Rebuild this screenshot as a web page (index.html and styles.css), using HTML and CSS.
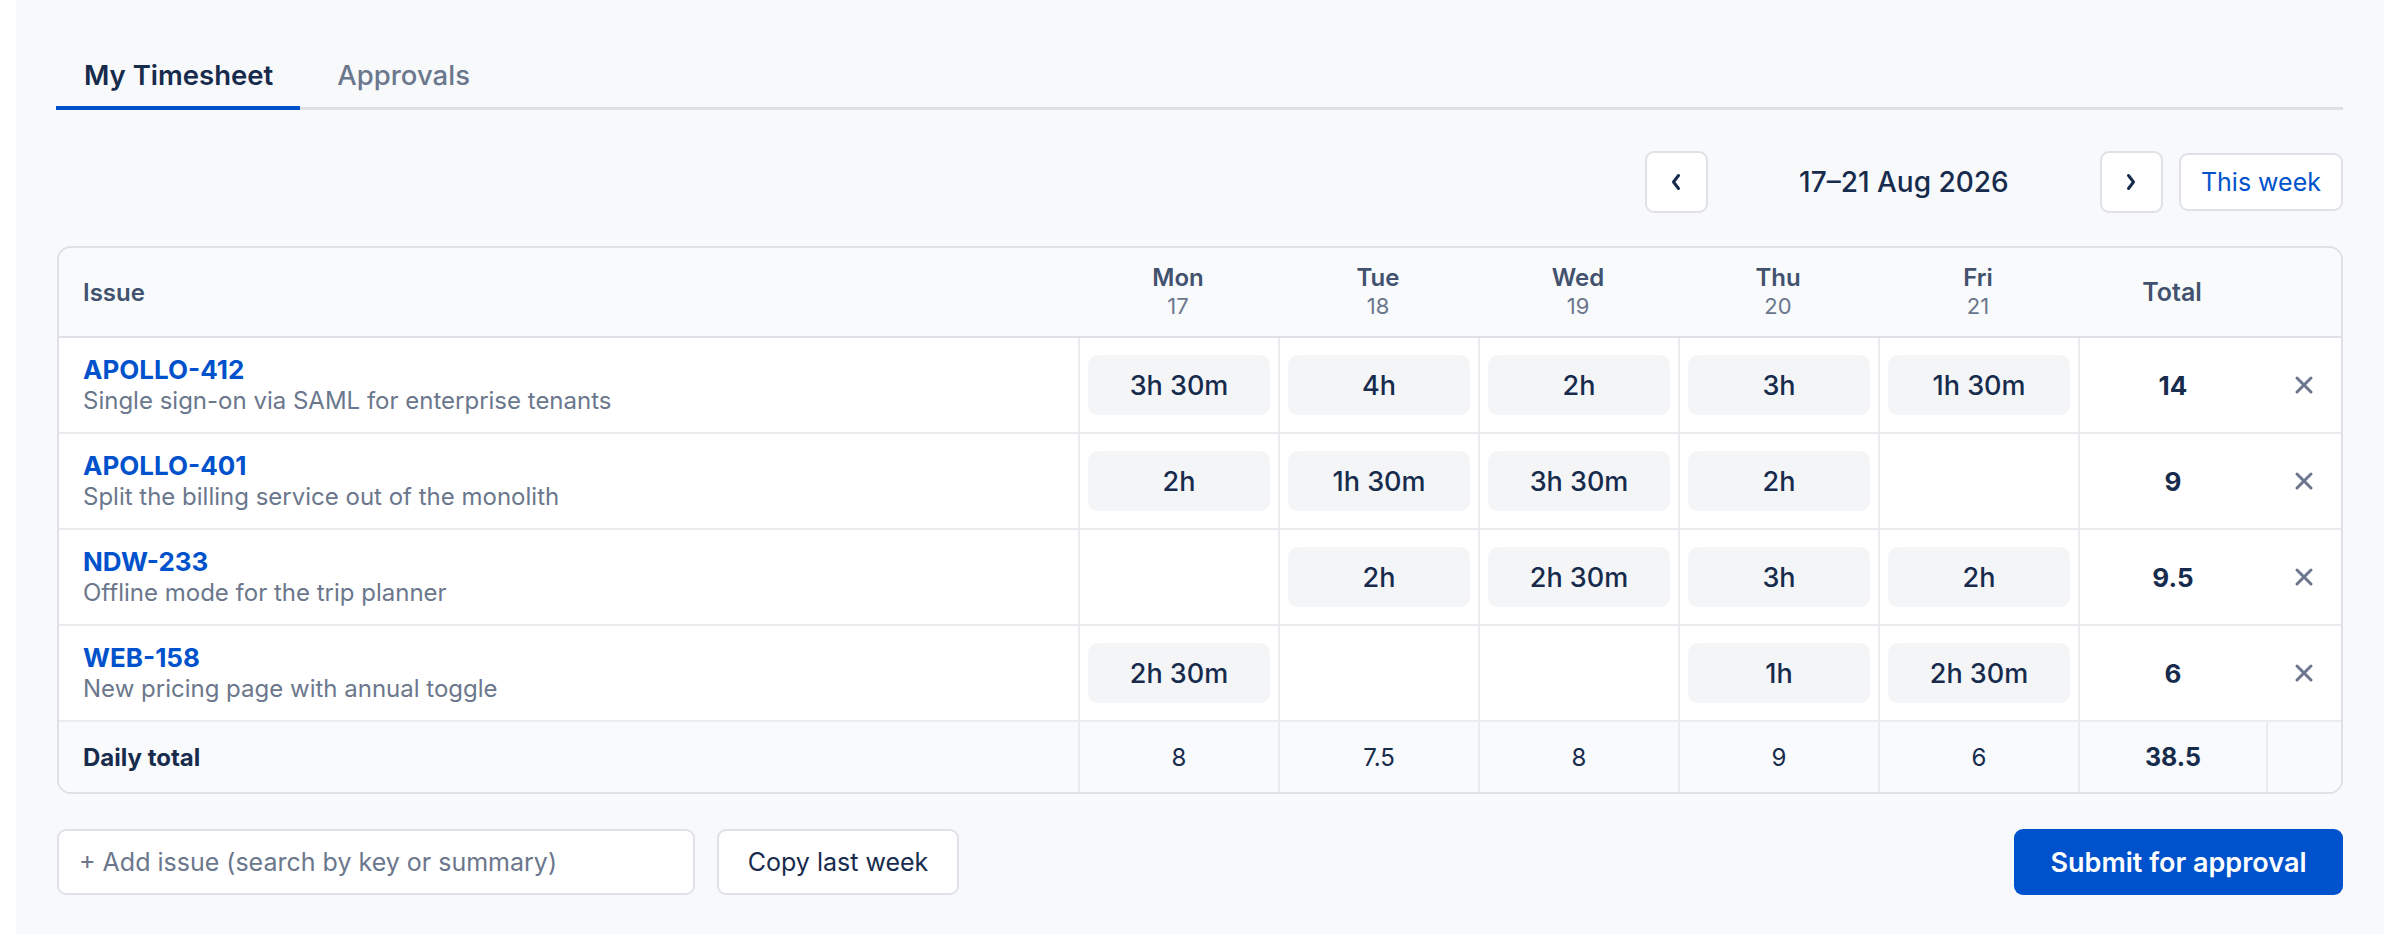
FILE: index.html
```html
<!DOCTYPE html>
<html lang="en">
<head>
<meta charset="utf-8">
<title>Timesheet</title>
<link rel="stylesheet" href="styles.css">
</head>
<body>
<div class="app">
  <nav class="tabs">
    <a class="tab tab-active">My Timesheet</a>
    <a class="tab">Approvals</a>
  </nav>

  <div class="week-nav">
    <button class="nav-btn" aria-label="Previous week">
      <svg width="12" height="18" viewBox="0 0 12 18"><polyline points="8.5,2.5 3.5,9 8.5,15.5" fill="none" stroke="#172b4d" stroke-width="3" stroke-linecap="round" stroke-linejoin="round"/></svg>
    </button>
    <div class="week-label">17–21 Aug 2026</div>
    <button class="nav-btn" aria-label="Next week">
      <svg width="12" height="18" viewBox="0 0 12 18"><polyline points="3.5,2.5 8.5,9 3.5,15.5" fill="none" stroke="#172b4d" stroke-width="3" stroke-linecap="round" stroke-linejoin="round"/></svg>
    </button>
    <button class="this-week">This week</button>
  </div>

  <div class="sheet">
    <div class="row head">
      <div class="cell issue-col">Issue</div>
      <div class="cell day"><span class="day-name">Mon</span><span class="day-date">17</span></div>
      <div class="cell day"><span class="day-name">Tue</span><span class="day-date">18</span></div>
      <div class="cell day"><span class="day-name">Wed</span><span class="day-date">19</span></div>
      <div class="cell day"><span class="day-name">Thu</span><span class="day-date">20</span></div>
      <div class="cell day"><span class="day-name">Fri</span><span class="day-date">21</span></div>
      <div class="cell total-head">Total</div>
      <div class="cell"></div>
    </div>

    <div class="row body">
      <div class="cell issue-col"><a class="key">APOLLO-412</a><span class="summary">Single sign-on via SAML for enterprise tenants</span></div>
      <div class="cell slot"><span class="pill">3h 30m</span></div>
      <div class="cell slot"><span class="pill">4h</span></div>
      <div class="cell slot"><span class="pill">2h</span></div>
      <div class="cell slot"><span class="pill">3h</span></div>
      <div class="cell slot"><span class="pill">1h 30m</span></div>
      <div class="cell slot total">14</div>
      <div class="cell remove"><svg width="20" height="20" viewBox="0 0 20 20"><path d="M3 3L17 17M17 3L3 17" stroke="#6b778c" stroke-width="3" stroke-linecap="round"/></svg></div>
    </div>

    <div class="row body">
      <div class="cell issue-col"><a class="key">APOLLO-401</a><span class="summary">Split the billing service out of the monolith</span></div>
      <div class="cell slot"><span class="pill">2h</span></div>
      <div class="cell slot"><span class="pill">1h 30m</span></div>
      <div class="cell slot"><span class="pill">3h 30m</span></div>
      <div class="cell slot"><span class="pill">2h</span></div>
      <div class="cell slot"></div>
      <div class="cell slot total">9</div>
      <div class="cell remove"><svg width="20" height="20" viewBox="0 0 20 20"><path d="M3 3L17 17M17 3L3 17" stroke="#6b778c" stroke-width="3" stroke-linecap="round"/></svg></div>
    </div>

    <div class="row body">
      <div class="cell issue-col"><a class="key">NDW-233</a><span class="summary">Offline mode for the trip planner</span></div>
      <div class="cell slot"></div>
      <div class="cell slot"><span class="pill">2h</span></div>
      <div class="cell slot"><span class="pill">2h 30m</span></div>
      <div class="cell slot"><span class="pill">3h</span></div>
      <div class="cell slot"><span class="pill">2h</span></div>
      <div class="cell slot total">9.5</div>
      <div class="cell remove"><svg width="20" height="20" viewBox="0 0 20 20"><path d="M3 3L17 17M17 3L3 17" stroke="#6b778c" stroke-width="3" stroke-linecap="round"/></svg></div>
    </div>

    <div class="row body">
      <div class="cell issue-col"><a class="key">WEB-158</a><span class="summary">New pricing page with annual toggle</span></div>
      <div class="cell slot"><span class="pill">2h 30m</span></div>
      <div class="cell slot"></div>
      <div class="cell slot"></div>
      <div class="cell slot"><span class="pill">1h</span></div>
      <div class="cell slot"><span class="pill">2h 30m</span></div>
      <div class="cell slot total">6</div>
      <div class="cell remove"><svg width="20" height="20" viewBox="0 0 20 20"><path d="M3 3L17 17M17 3L3 17" stroke="#6b778c" stroke-width="3" stroke-linecap="round"/></svg></div>
    </div>

    <div class="row foot">
      <div class="cell issue-col foot-label">Daily total</div>
      <div class="cell slot">8</div>
      <div class="cell slot">7.5</div>
      <div class="cell slot">8</div>
      <div class="cell slot">9</div>
      <div class="cell slot">6</div>
      <div class="cell slot total">38.5</div>
      <div class="cell slot"></div>
    </div>
  </div>

  <div class="actions">
    <input class="add-issue" type="text" placeholder="+ Add issue (search by key or summary)">
    <button class="copy-btn">Copy last week</button>
    <button class="submit-btn">Submit for approval</button>
  </div>
</div>
</body>
</html>
```

FILE: styles.css
```css
* {
  box-sizing: border-box;
}

html, body {
  margin: 0;
  background: #ffffff;
}

body {
  font-family: Inter, "Noto Sans", "Liberation Sans", sans-serif;
  color: #172b4d;
}

.app {
  margin: 0 16px;
  min-height: 934px;
  padding: 43px 41px 0;
  background: #f8f9fb;
}

/* tabs */
.tabs {
  display: flex;
  gap: 10px;
  border-bottom: 3px solid #dfe1e6;
}

.tab {
  display: block;
  padding: 12px 27px;
  margin-bottom: -3px;
  border-bottom: 3px solid transparent;
  font-size: 27.5px;
  line-height: 40px;
  font-weight: 500;
  color: #6b778c;
}

.tab-active {
  margin-left: -1px;
  padding-left: 28px;
  border-bottom: 4px solid #0052cc;
  margin-bottom: -3px;
  padding-bottom: 11px;
  font-weight: 600;
  color: #172b4d;
}

/* week navigation */
.week-nav {
  display: flex;
  justify-content: flex-end;
  align-items: center;
  gap: 16px;
  margin-top: 41px;
  height: 62px;
}

.nav-btn {
  width: 63px;
  height: 62px;
  display: flex;
  align-items: center;
  justify-content: center;
  padding: 0;
  background: #ffffff;
  border: 2px solid #dfe1e6;
  border-radius: 9px;
}

.week-label {
  width: 360px;
  text-align: center;
  font-size: 28px;
  font-weight: 500;
  color: #172b4d;
}

.this-week {
  height: 58px;
  padding: 0 20px;
  background: #ffffff;
  border: 2px solid #dfe1e6;
  border-radius: 9px;
  font-family: inherit;
  font-size: 25px;
  color: #0052cc;
}

/* timesheet grid */
.sheet {
  margin-top: 33px;
  background: #ffffff;
  border: 2px solid #dfe1e6;
  border-radius: 14px;
  overflow: hidden;
}

.row {
  display: grid;
  grid-template-columns: 1fr repeat(5, 200px) 188px 75px;
}

.cell {
  display: flex;
  align-items: center;
  min-width: 0;
}

.head {
  height: 90px;
  background: #f9fafc;
  border-bottom: 2px solid #dfe1e6;
}

.head .issue-col {
  padding-left: 24px;
  font-size: 24px;
  font-weight: 600;
  color: #42526e;
}

.day {
  flex-direction: column;
  justify-content: center;
  line-height: 29px;
}

.day-name {
  font-size: 24px;
  font-weight: 600;
  color: #42526e;
}

.day-date {
  font-size: 22px;
  color: #6b778c;
}

.total-head {
  justify-content: center;
  font-size: 25px;
  font-weight: 600;
  color: #42526e;
}

.body {
  height: 96px;
  border-bottom: 2px solid #ebecf0;
}

.body .issue-col {
  flex-direction: column;
  align-items: flex-start;
  justify-content: center;
  padding-left: 24px;
}

.key {
  font-size: 26px;
  line-height: 32px;
  font-weight: 700;
  color: #0052cc;
}

.summary {
  font-size: 24px;
  line-height: 30px;
  color: #6b778c;
}

.slot {
  justify-content: center;
  padding: 0 8px;
  border-left: 2px solid #ebecf0;
  font-size: 25px;
}

.pill {
  width: 100%;
  height: 60px;
  display: flex;
  align-items: center;
  justify-content: center;
  background: #f4f5f7;
  border-radius: 10px;
  font-size: 27px;
  font-weight: 500;
  color: #172b4d;
}

.total {
  font-size: 26px;
  font-weight: 700;
  color: #172b4d;
}

.remove {
  justify-content: center;
}

.foot {
  height: 70px;
  background: #f9fafc;
}

.foot .slot {
  font-size: 24px;
  color: #172b4d;
}

.foot .total {
  font-size: 25px;
  font-weight: 700;
}

.foot-label {
  padding-left: 24px;
  font-size: 24px;
  font-weight: 700;
  color: #172b4d;
}

/* bottom actions */
.actions {
  display: flex;
  align-items: center;
  gap: 22px;
  margin-top: 35px;
}

.add-issue {
  width: 638px;
  height: 66px;
  padding: 0 20px;
  background: #ffffff;
  border: 2px solid #dfe1e6;
  border-radius: 9px;
  font-family: inherit;
  font-size: 25px;
  color: #172b4d;
}

.add-issue::placeholder {
  color: #6b778c;
}

.copy-btn {
  width: 242px;
  height: 66px;
  background: #ffffff;
  border: 2px solid #dfe1e6;
  border-radius: 9px;
  font-family: inherit;
  font-size: 25px;
  color: #172b4d;
}

.submit-btn {
  margin-left: auto;
  width: 329px;
  height: 66px;
  background: #0052cc;
  border: none;
  border-radius: 9px;
  font-family: inherit;
  font-size: 27px;
  font-weight: 600;
  color: #ffffff;
}
```
